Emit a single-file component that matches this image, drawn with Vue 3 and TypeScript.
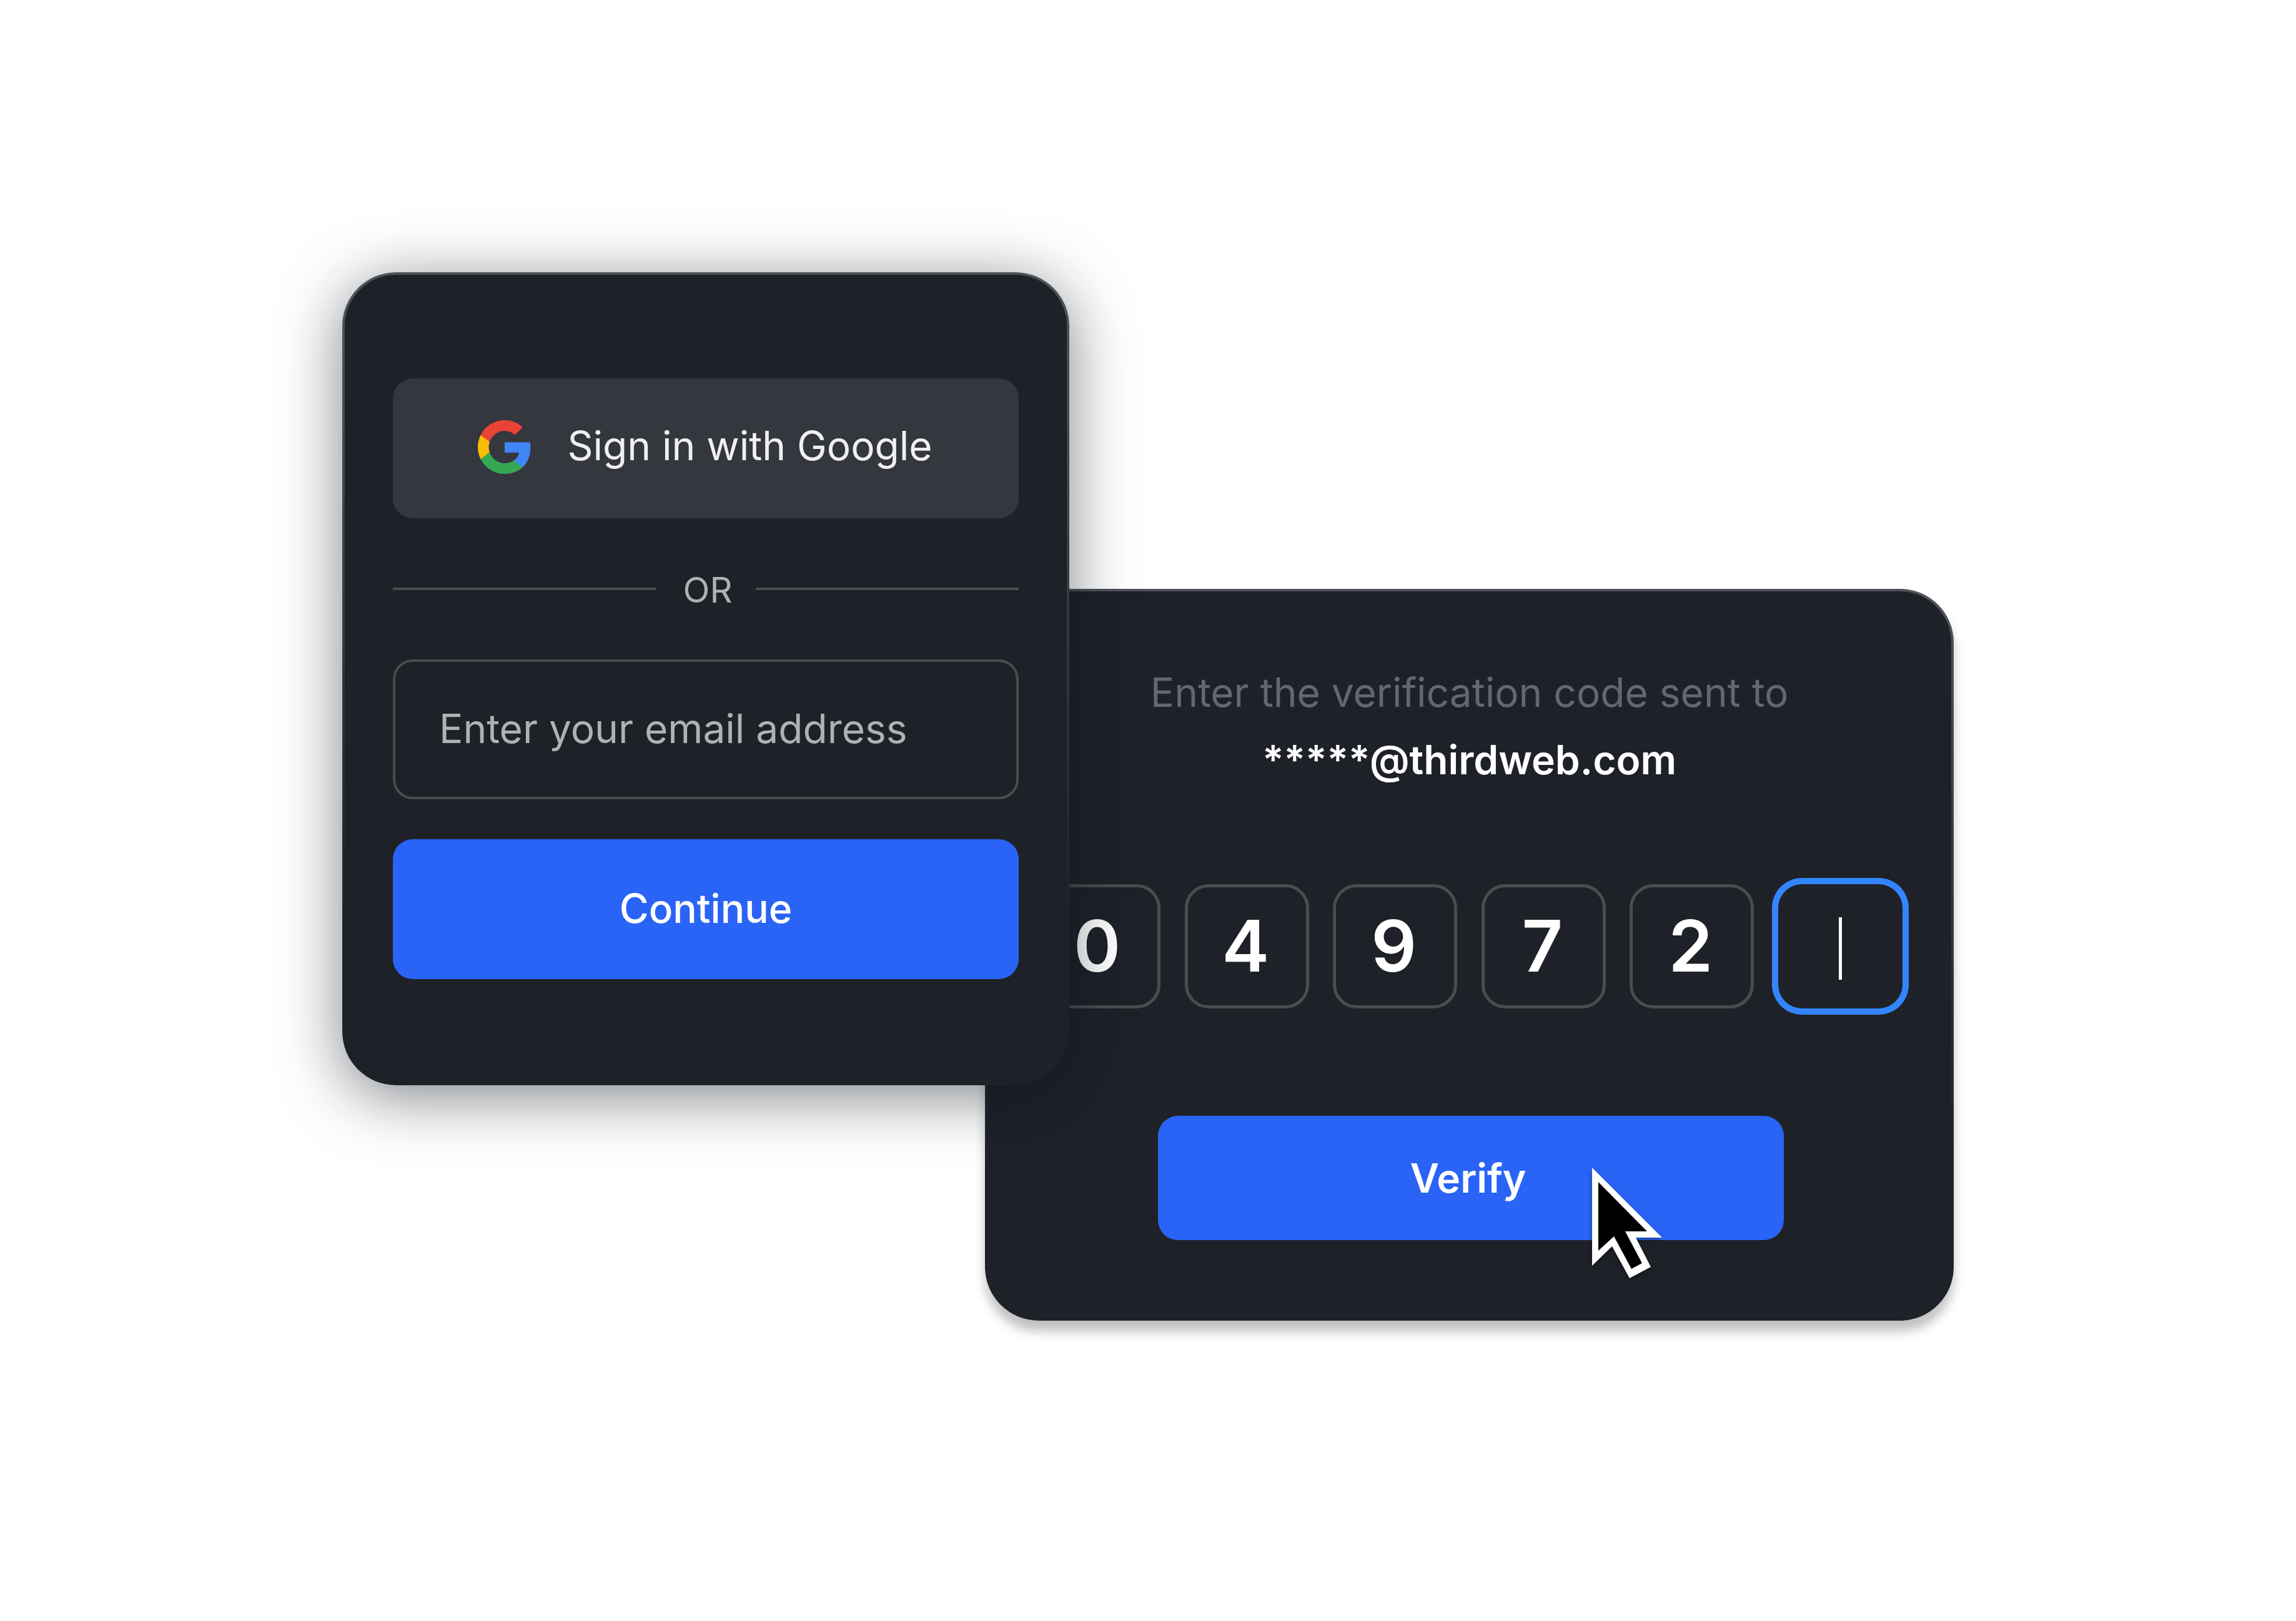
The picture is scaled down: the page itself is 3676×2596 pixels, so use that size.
<script setup lang="ts">
import { ref } from 'vue'

const email = ref<string>('')
const maskedEmail = '*****@thirdweb.com'
const digits = ref<string[]>(['0', '4', '9', '7', '2', ''])
const activeIndex = 5
</script>

<template>
  <main class="scene">
    <form class="card login" @submit.prevent>
      <button type="button" class="button google">
        <svg class="google-logo" viewBox="1 1 22 22" aria-hidden="true">
          <path
            fill="#4285F4"
            d="M22.56 12.25c0-.78-.07-1.53-.2-2.25H12v4.26h5.92c-.26 1.37-1.04 2.53-2.21 3.31v2.77h3.57c2.08-1.92 3.28-4.74 3.28-8.09z"
          />
          <path
            fill="#34A853"
            d="M12 23c2.97 0 5.46-.98 7.28-2.66l-3.57-2.77c-.98.66-2.23 1.06-3.71 1.06-2.86 0-5.29-1.93-6.16-4.53H2.18v2.84C3.99 20.53 7.7 23 12 23z"
          />
          <path
            fill="#FBBC05"
            d="M5.84 14.09c-.22-.66-.35-1.36-.35-2.09s.13-1.43.35-2.09V7.07H2.18C1.43 8.55 1 10.22 1 12s.43 3.45 1.18 4.93l3.66-2.84z"
          />
          <path
            fill="#EA4335"
            d="M12 5.38c1.62 0 3.06.56 4.21 1.64l3.15-3.15C17.45 2.09 14.97 1 12 1 7.7 1 3.99 3.47 2.18 7.07l3.66 2.84c.87-2.6 3.3-4.53 6.16-4.53z"
          />
        </svg>
        <span class="google-label">Sign in with Google</span>
      </button>

      <div class="divider"><span class="divider-label">OR</span></div>

      <input
        v-model="email"
        class="email"
        type="email"
        aria-label="Email address"
        placeholder="Enter your email address"
      />

      <button type="submit" class="button primary continue">Continue</button>
    </form>

    <form class="card verify" @submit.prevent>
      <p class="message">
        Enter the verification code sent to
        <strong>{{ maskedEmail }}</strong>
      </p>

      <div class="code" role="group" aria-label="Verification code">
        <input
          v-for="(_, i) in digits"
          :key="i"
          v-model="digits[i]"
          class="digit"
          :class="{ active: i === activeIndex }"
          type="text"
          inputmode="numeric"
          maxlength="1"
          :aria-label="`Digit ${i + 1}`"
        />
      </div>

      <button type="submit" class="button primary submit">
        Verify
        <svg class="cursor" viewBox="0 0 112 178" aria-hidden="true">
          <path fill="#fff" d="M0 0L112 112H70L94 159L60 177L32 126L0 157Z" />
          <path fill="#000" d="M10 23L88 102H53L80 153L63 162L35 110L10 133Z" />
        </svg>
      </button>
    </form>
  </main>
</template>

<style>
body {
  margin: 0;
  background: #fff;
}
</style>

<style scoped>
.scene {
  display: flex;
  justify-content: center;
  align-items: flex-start;
  box-sizing: border-box;
  min-height: 100vh;
  padding: 436px 40px 160px;
  font-family: Inter, "Liberation Sans", sans-serif;
  font-size: 64px;
}

.card {
  display: flex;
  flex-direction: column;
  box-sizing: border-box;
  border: 4px solid transparent;
  border-radius: 86px;
  background:
    linear-gradient(#1e2128, #1e2128) padding-box,
    linear-gradient(180deg, #505459, #1e2128 80%) border-box;
}

.login {
  position: relative;
  z-index: 1;
  flex: 0 1 1164px;
  gap: 64px;
  padding: 166px 77px;
  box-shadow: 0 17px 100px rgba(10, 18, 28, 0.53);
}

.verify {
  flex: 0 1 1551px;
  align-items: center;
  margin: 507px 0 0 -135px;
  padding: 108px 78px 125px;
  box-shadow: 0 17px 17px rgba(0, 0, 0, 0.25);
}

.button {
  display: flex;
  align-items: center;
  justify-content: center;
  box-sizing: border-box;
  margin: 0;
  padding: 0;
  border: 0;
  border-radius: 32px;
  color: #fff;
  font: inherit;
  cursor: pointer;
}

.google {
  gap: 57px;
  height: 224px;
  padding: 0 2px 4px 0;
  background: #35373f;
  color: #f0f0f0;
}

.google-logo {
  width: 86px;
  height: 86px;
}

.google-label {
  padding-bottom: 6px;
}

.primary {
  background: #2a64f6;
}

.continue {
  height: 224px;
  padding-bottom: 4px;
  font-weight: 500;
}

.divider {
  display: flex;
  align-items: center;
  gap: 38px;
  height: 98px;
  color: #b0b1b3;
  font-size: 56px;
}

.divider::before,
.divider::after {
  content: "";
  flex: 1;
  height: 4px;
  background: #4b4c50;
}

.divider-label {
  padding: 4px 0 0 6px;
}

.email {
  box-sizing: border-box;
  width: 100%;
  height: 224px;
  margin: 0;
  padding: 0 70px 4px;
  border: 4px solid #4b4c50;
  border-radius: 32px;
  outline: 0;
  background: transparent;
  color: #f0f0f0;
  font: inherit;
}

.email::placeholder {
  color: #b0b1b3;
  opacity: 1;
}

.message {
  margin: 0;
  color: #606875;
  line-height: 108px;
  text-align: center;
}

.message strong {
  display: block;
  color: #fff;
  font-weight: 600;
}

.code {
  display: flex;
  justify-content: space-between;
  align-self: stretch;
  margin: 145px 0 172px;
}

.digit {
  flex: 0 1 199px;
  box-sizing: border-box;
  min-width: 0;
  height: 199px;
  margin: 0;
  padding: 0 4px 2px 0;
  border: 5px solid #4b4c50;
  border-radius: 38px;
  outline: 0;
  background: transparent;
  color: #fff;
  font: inherit;
  font-size: 114px;
  font-weight: 600;
  text-align: center;
}

.digit.active {
  border-color: transparent;
  background: linear-gradient(#fff, #fff) center 48px / 5px 100px no-repeat;
  box-shadow: 0 0 0 10px #3385ff;
}

.submit {
  position: relative;
  width: 1002px;
  max-width: 100%;
  height: 199px;
  margin-left: 4px;
  padding-right: 8px;
  font-weight: 600;
}

.cursor {
  position: absolute;
  top: 83px;
  right: 195px;
  width: 112px;
  height: 178px;
  overflow: visible;
  filter: drop-shadow(0 4px 4px rgba(0, 0, 0, 0.35));
}
</style>
